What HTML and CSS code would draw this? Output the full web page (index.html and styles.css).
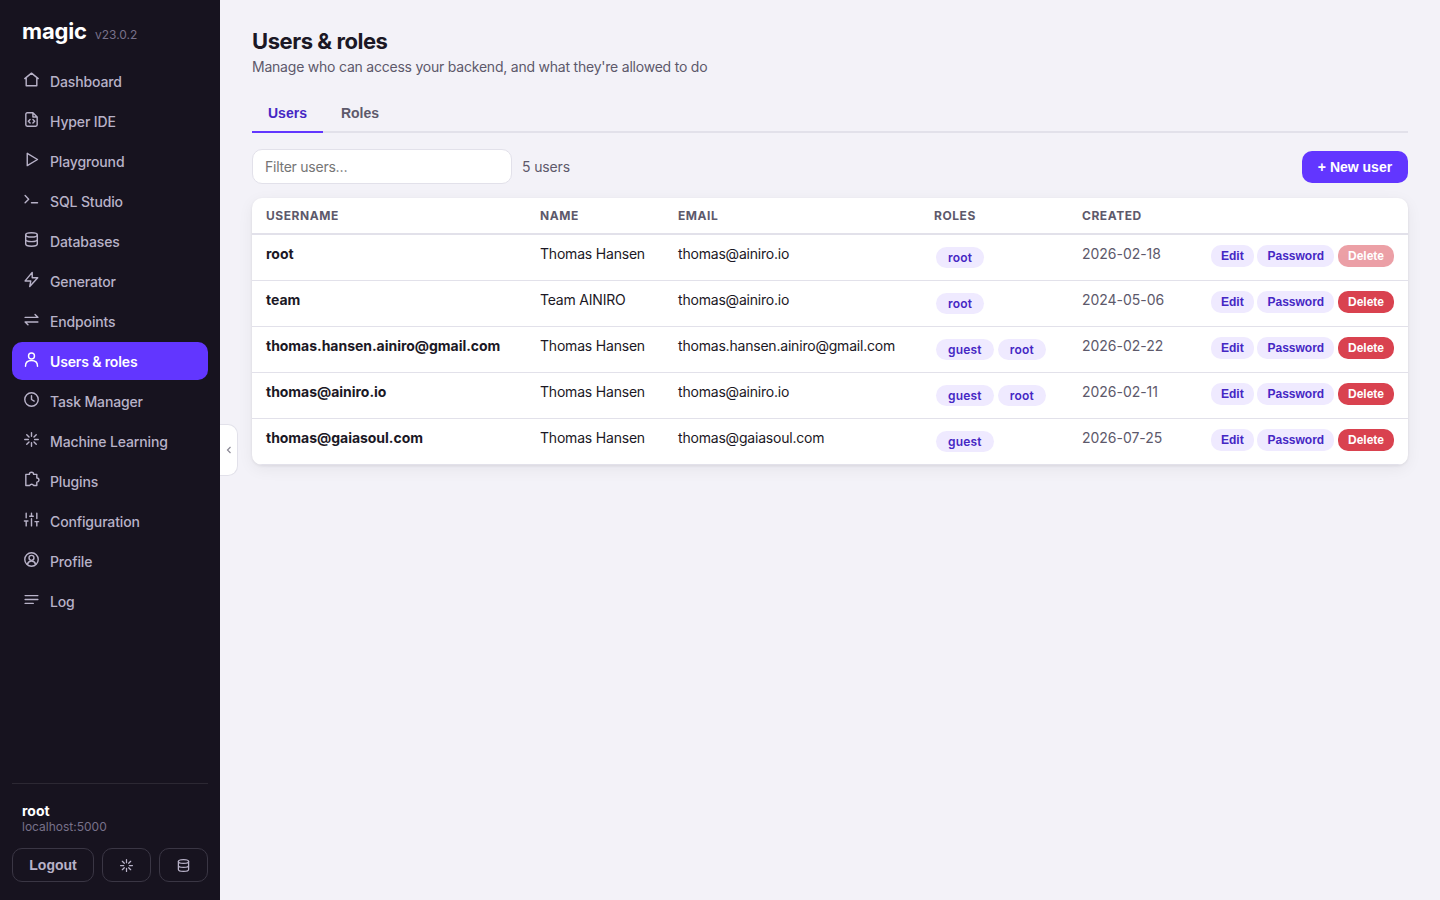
FILE: index.html
```html
<!DOCTYPE html>
<html lang="en">
  <head>
    <meta charset="utf-8" />
    <title>Magic - Users &amp; roles</title>
    <link rel="stylesheet" href="styles.css" />
  </head>
  <body>
    <svg class="sprite">
      <symbol id="i-spark" viewBox="0 0 24 24">
        <path d="M12 2.500v5M12 16.500v5M2.500 12h5M16.500 12h5M5.300 5.300l3.200 3.200M15.500 15.500l3.200 3.200M5.300 18.700l3.200-3.200M15.500 8.500l3.200-3.200" />
      </symbol>
      <symbol id="i-db" viewBox="0 0 24 24">
        <ellipse cx="12" cy="5.500" rx="8.200" ry="3" />
        <path d="M3.800 5.500v13c0 1.700 3.700 3 8.200 3s8.200-1.300 8.200-3v-13M3.800 12c0 1.700 3.700 3 8.200 3s8.200-1.300 8.200-3" />
      </symbol>
    </svg>

    <aside class="sidebar">
      <div class="brand">
        <span class="brand-name">magic</span>
        <span class="brand-version">v23.0.2</span>
      </div>
      <nav class="nav">
        <a class="nav-item"><svg class="icon" viewBox="0 0 24 24"><path d="M2.500 10.700 12 3l9.500 7.700M4.500 9.200V20.800h15V9.200" /></svg><span>Dashboard</span></a>
        <a class="nav-item"><svg class="icon" viewBox="0 0 24 24"><path d="M14 2.500H6a2 2 0 0 0-2 2v15a2 2 0 0 0 2 2h12a2 2 0 0 0 2-2v-11zM14 2.500v6h6M10 12l-2.500 2.500 2.500 2.500M14 12l2.500 2.500-2.500 2.500" /></svg><span>Hyper IDE</span></a>
        <a class="nav-item"><svg class="icon" viewBox="0 0 24 24"><path d="M6 3.300v17.400L20.500 12z" /></svg><span>Playground</span></a>
        <a class="nav-item"><svg class="icon" viewBox="0 0 24 24"><path d="M3 6.500l5 5-5 5M12 16.500h8.500" /></svg><span>SQL Studio</span></a>
        <a class="nav-item"><svg class="icon"><use href="#i-db" /></svg><span>Databases</span></a>
        <a class="nav-item"><svg class="icon" viewBox="0 0 24 24"><path d="M13 2 3 14h8l-1.500 8L20.800 9.500H13z" /></svg><span>Generator</span></a>
        <a class="nav-item"><svg class="icon" viewBox="0 0 24 24"><path d="M3 9h18l-4-4M21 15.500H3l4 4" /></svg><span>Endpoints</span></a>
        <a class="nav-item active"><svg class="icon" viewBox="0 0 24 24"><circle cx="12" cy="7" r="4.200" /><path d="M3.500 21.500c0-5.500 3.500-8 8.500-8s8.500 2.500 8.500 8" /></svg><span>Users &amp; roles</span></a>
        <a class="nav-item"><svg class="icon" viewBox="0 0 24 24"><circle cx="12" cy="12" r="9.500" /><path d="M12 6.500V12l3.800 2.200" /></svg><span>Task Manager</span></a>
        <a class="nav-item"><svg class="icon"><use href="#i-spark" /></svg><span>Machine Learning</span></a>
        <a class="nav-item"><svg class="icon" viewBox="0 0 24 24"><path d="M4 4.800h5a3 3 0 0 1 6 0h4.500v5a3 3 0 0 1 0 6v4.700h-4.500a3 3 0 0 0-5.500 0H4z" /></svg><span>Plugins</span></a>
        <a class="nav-item"><svg class="icon" viewBox="0 0 24 24"><path d="M4.500 3v6.500M4.500 14V21M12 3v4M12 11v10M19.500 3v7.500M19.500 15.500V21M2 14h5M9.500 7.500h5M17 15h5" /></svg><span>Configuration</span></a>
        <a class="nav-item"><svg class="icon" viewBox="0 0 24 24"><circle cx="12" cy="12" r="9.500" /><circle cx="12" cy="9.700" r="3.500" /><path d="M6.300 18.700c.8-3 2.800-4.500 5.700-4.500s4.900 1.500 5.700 4.500" /></svg><span>Profile</span></a>
        <a class="nav-item"><svg class="icon" viewBox="0 0 24 24"><path d="M3 6.500h18M3 12h18M3 17.500h11.500" /></svg><span>Log</span></a>
      </nav>
      <div class="account">
        <div class="account-name">root</div>
        <div class="account-host">localhost:5000</div>
        <div class="account-actions">
          <button class="side-btn logout">Logout</button>
          <button class="side-btn"><svg class="icon"><use href="#i-spark" /></svg></button>
          <button class="side-btn"><svg class="icon"><use href="#i-db" /></svg></button>
        </div>
      </div>
    </aside>
    <button class="collapse"><svg viewBox="0 0 6 8"><path d="M4.500 1 1.500 4l3 3" /></svg></button>

    <main class="content">
      <h1>Users &amp; roles</h1>
      <p class="subtitle">Manage who can access your backend, and what they're allowed to do</p>

      <div class="tabs">
        <button class="tab selected">Users</button>
        <button class="tab">Roles</button>
      </div>

      <div class="toolbar">
        <input class="filter" type="text" placeholder="Filter users…" />
        <span class="count">5 users</span>
        <button class="new-user">+ New user</button>
      </div>

      <div class="card">
        <table class="users">
          <colgroup>
            <col class="col-username" />
            <col class="col-name" />
            <col class="col-email" />
            <col class="col-roles" />
            <col class="col-created" />
            <col />
          </colgroup>
          <thead>
            <tr>
              <th>Username</th>
              <th>Name</th>
              <th>Email</th>
              <th>Roles</th>
              <th>Created</th>
              <th></th>
            </tr>
          </thead>
          <tbody>
            <tr>
              <td class="username">root</td>
              <td>Thomas Hansen</td>
              <td>thomas@ainiro.io</td>
              <td><div class="pills"><span class="pill">root</span></div></td>
              <td class="date">2026-02-18</td>
              <td><div class="actions"><button>Edit</button><button>Password</button><button class="danger" disabled>Delete</button></div></td>
            </tr>
            <tr>
              <td class="username">team</td>
              <td>Team AINIRO</td>
              <td>thomas@ainiro.io</td>
              <td><div class="pills"><span class="pill">root</span></div></td>
              <td class="date">2024-05-06</td>
              <td><div class="actions"><button>Edit</button><button>Password</button><button class="danger">Delete</button></div></td>
            </tr>
            <tr>
              <td class="username">thomas.hansen.ainiro@gmail.com</td>
              <td>Thomas Hansen</td>
              <td>thomas.hansen.ainiro@gmail.com</td>
              <td><div class="pills"><span class="pill">guest</span><span class="pill">root</span></div></td>
              <td class="date">2026-02-22</td>
              <td><div class="actions"><button>Edit</button><button>Password</button><button class="danger">Delete</button></div></td>
            </tr>
            <tr>
              <td class="username">thomas@ainiro.io</td>
              <td>Thomas Hansen</td>
              <td>thomas@ainiro.io</td>
              <td><div class="pills"><span class="pill">guest</span><span class="pill">root</span></div></td>
              <td class="date">2026-02-11</td>
              <td><div class="actions"><button>Edit</button><button>Password</button><button class="danger">Delete</button></div></td>
            </tr>
            <tr>
              <td class="username">thomas@gaiasoul.com</td>
              <td>Thomas Hansen</td>
              <td>thomas@gaiasoul.com</td>
              <td><div class="pills"><span class="pill">guest</span></div></td>
              <td class="date">2026-07-25</td>
              <td><div class="actions"><button>Edit</button><button>Password</button><button class="danger">Delete</button></div></td>
            </tr>
          </tbody>
        </table>
      </div>
    </main>
  </body>
</html>
```
FILE: styles.css
```css
* {
  box-sizing: border-box;
}

body {
  margin: 0;
  height: 100vh;
  display: flex;
  overflow: hidden;
  position: relative;
  background: #f3f2f8;
  color: #1b1825;
  font-family: Inter, sans-serif;
  font-size: 14px;
  line-height: 20px;
}

button {
  font-family: "Liberation Sans", Arial, sans-serif;
  font-weight: bold;
  border: none;
  padding: 0;
  cursor: pointer;
}

.sprite {
  display: none;
}

.icon {
  width: 17px;
  height: 17px;
  flex: none;
  fill: none;
  stroke: currentColor;
  stroke-width: 2;
  stroke-linejoin: round;
  stroke-linecap: round;
}

/* Sidebar */
.sidebar {
  width: 220px;
  flex: none;
  display: flex;
  flex-direction: column;
  padding: 18px 12px;
  background: #17131f;
  color: #b8b2c8;
}

.brand {
  display: flex;
  align-items: baseline;
  gap: 8px;
  height: 44px;
  padding: 0 10px;
  line-height: 26px;
}

.brand-name {
  color: #fff;
  font-size: 22px;
  font-weight: 700;
  letter-spacing: -0.15px;
}

.brand-version {
  color: #77718a;
  font-size: 12px;
}

.nav {
  flex: 1;
  display: flex;
  flex-direction: column;
  gap: 2px;
}

.nav-item {
  display: flex;
  align-items: center;
  gap: 10px;
  height: 38px;
  padding: 1px 10px 0 11px;
  border-radius: 10px;
  font-weight: 500;
  letter-spacing: -0.14px;
}

.nav-item .icon {
  margin-bottom: 5px;
}

.nav-item.active {
  background: #6236ff;
  color: #fff;
  font-weight: 600;
}

.account {
  border-top: 1px solid #2c2833;
  padding-top: 18px;
}

.account-name {
  padding: 0 10px;
  color: #fff;
  font-weight: 700;
  line-height: 18px;
}

.account-host {
  padding: 0 10px;
  color: #77718a;
  font-size: 12px;
  line-height: 14px;
}

.account-actions {
  display: flex;
  gap: 8px;
  margin-top: 14px;
}

.side-btn {
  display: flex;
  align-items: center;
  justify-content: center;
  width: 49px;
  height: 34px;
  background: transparent;
  border: 1px solid #3a3644;
  border-radius: 10px;
  color: #b8b2c8;
  font-size: 14px;
}

.side-btn.logout {
  width: 82px;
}

.side-btn .icon {
  width: 15px;
  height: 15px;
}

.collapse {
  position: absolute;
  left: 220px;
  top: 424px;
  width: 18px;
  height: 52px;
  background: #fff;
  border: 1px solid #e2e1ea;
  border-left: none;
  border-radius: 0 10px 10px 0;
}

.collapse svg {
  display: block;
  width: 6px;
  height: 8px;
  margin: 0 auto;
  fill: none;
  stroke: #8a8794;
  stroke-width: 1.2;
}

/* Content */
.content {
  flex: 1;
  padding: 28px 32px;
}

h1 {
  margin: 0;
  font-size: 22px;
  line-height: 26px;
  font-weight: 700;
  letter-spacing: -0.45px;
}

.subtitle {
  margin: 3px 0 0;
  color: #5d596b;
  letter-spacing: -0.22px;
}

.tabs {
  display: flex;
  gap: 2px;
  margin-top: 18px;
  border-bottom: 2px solid #e2e1ea;
}

.tab {
  height: 38px;
  margin-bottom: -2px;
  padding: 0 16px;
  background: none;
  border-bottom: 2px solid transparent;
  color: #5d596b;
  font-size: 14px;
}

.tab.selected {
  color: #4527c4;
  border-bottom-color: #6236ff;
}

.toolbar {
  display: flex;
  align-items: center;
  gap: 10px;
  height: 35px;
  margin: 16px 0 14px;
}

.filter {
  width: 260px;
  height: 35px;
  padding: 0 12px;
  border: 1px solid #e2e1ea;
  border-radius: 10px;
  background: #fff;
  font: 14px Inter, sans-serif;
  letter-spacing: -0.25px;
}

.count {
  color: #5d596b;
  letter-spacing: -0.15px;
}

.new-user {
  width: 106px;
  height: 32px;
  margin-left: auto;
  border-radius: 10px;
  background: #6236ff;
  color: #fff;
  font-size: 14px;
}

.card {
  overflow: hidden;
  border-radius: 10px;
  background: #fff;
  box-shadow: 0 1px 3px rgba(23, 19, 31, 0.08), 0 4px 16px rgba(23, 19, 31, 0.06);
}

.users {
  width: 100%;
  table-layout: fixed;
  border-collapse: separate;
  border-spacing: 0;
}

.col-username {
  width: 274px;
}

.col-name {
  width: 138px;
}

.col-email {
  width: 256px;
}

.col-roles {
  width: 148px;
}

.col-created {
  width: 129px;
}

.users th {
  height: 37px;
  padding: 0 14px;
  border-bottom: 2px solid #e2e1ea;
  color: #5d596b;
  font-size: 12px;
  font-weight: 700;
  letter-spacing: 0.55px;
  text-align: left;
  text-transform: uppercase;
}

.users td {
  height: 46px;
  padding: 9px 14px 0;
  border-bottom: 1px solid #e2e1ea;
  letter-spacing: -0.2px;
  vertical-align: top;
  white-space: nowrap;
}

.users .username {
  font-weight: 700;
  letter-spacing: -0.03px;
}

.users .date {
  color: #5d596b;
  letter-spacing: -0.03px;
}

.pills {
  display: flex;
  gap: 4px;
  padding: 3px 2px 0;
}

.pill {
  height: 21px;
  padding: 0 12px;
  border-radius: 11px;
  background: #efeaff;
  color: #4527c4;
  font-size: 12px;
  font-weight: 600;
  letter-spacing: 0.2px;
  line-height: 21px;
}

.actions {
  display: flex;
  justify-content: flex-end;
  gap: 3.8px;
  padding-top: 1px;
}

.actions button {
  height: 22px;
  padding: 0 10px;
  border-radius: 10px;
  background: #efeaff;
  color: #4527c4;
  font-size: 12px;
}

.actions .danger {
  background: #d9424f;
  color: #fff;
}

.actions .danger:disabled {
  opacity: 0.5;
}
```
